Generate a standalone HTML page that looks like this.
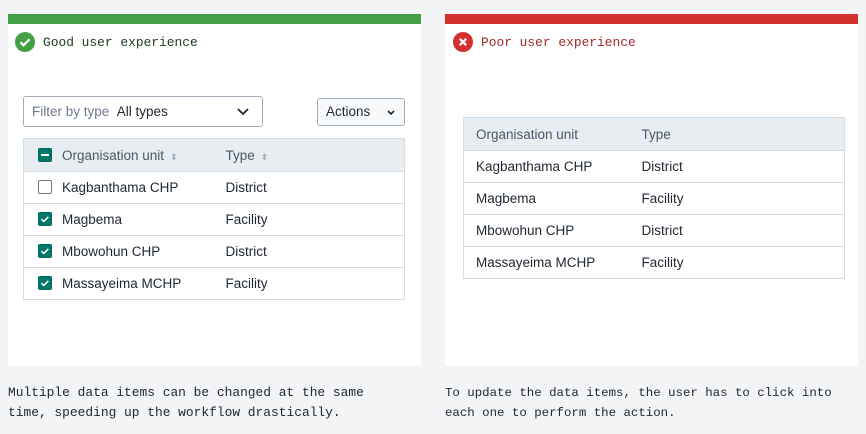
<!DOCTYPE html>
<html><head><style>
*{box-sizing:border-box;margin:0;padding:0}
body{width:866px;height:434px;background:#f3f4f6;position:relative;font-family:"Liberation Sans",sans-serif;overflow:hidden}
.panel{position:absolute;top:14px;width:413px;height:352px;background:#fff}
.bar{height:10px}
.title{position:absolute;top:18px;left:7px;display:flex;align-items:center;font-family:"Liberation Mono",monospace;font-size:12.9px}
.title svg{margin-right:8px}
.cap{position:absolute;top:383px;font-family:"Liberation Mono",monospace;font-size:12.9px;line-height:20px;color:#212934}
table{position:absolute;border-collapse:collapse;font-size:13.5px;color:#212934;width:382px}
td,th{border:1px solid #d5dde5;height:32px;text-align:left;font-weight:normal;padding:0}
th{background:#e8edf2;color:#4a5768;height:33px}
td{border-left:none;border-right:none}
tr td:first-child{border-left:1px solid #d5dde5}
tr td:last-child{border-right:1px solid #d5dde5}
th{border-left:none;border-right:none}
th:first-child{border-left:1px solid #d5dde5}th:last-child{border-right:1px solid #d5dde5}
.cb{display:inline-block;width:14px;height:14px;border-radius:2px;vertical-align:-2px;margin:0 10px 0 14px}
.on{background:#00796b;border:1px solid #00695c;position:relative}
.off{border:1px solid #6e7a8a;background:#fff}
.sort{color:#a0adba;font-size:9px;margin-left:6px}
</style></head><body>
<div class="panel" style="left:8px">
<div class="bar" style="background:#43a047"></div>
<div class="title" style="color:#1b3a1f"><svg width="20" height="20" viewBox="0 0 20 20"><circle cx="10" cy="10" r="10" fill="#43a047"/><path d="M5.5 10.3l3 3 6-6" stroke="#fff" stroke-width="2.2" fill="none"/></svg>Good user experience</div>
<div style="position:absolute;left:15px;top:82px;width:240px;height:31px;border:1px solid #a0adba;border-radius:3px;font-size:13.5px;line-height:29px;padding-left:8px"><span style="color:#6e7a8a">Filter by type</span>&nbsp;&nbsp;<span style="color:#212934">All types</span><svg style="position:absolute;right:13px;top:11px" width="12" height="8" viewBox="0 0 12 8"><path d="M1 1l5 5 5-5" stroke="#212934" stroke-width="1.8" fill="none"/></svg></div>
<div style="position:absolute;left:309px;top:84px;width:88px;height:28px;border:1px solid #a0adba;border-radius:3px;background:#f8f9fa;font-size:13.5px;line-height:26px;padding-left:8px;color:#212934">Actions<svg style="position:absolute;right:9px;top:11px" width="8" height="6" viewBox="0 0 8 6"><path d="M1 1l3 3 3-3" stroke="#212934" stroke-width="1.6" fill="none"/></svg></div>
<table style="left:15px;top:124px">
<tr><th style="width:202px"><span class="cb on"><span style="position:absolute;left:2px;top:5px;width:8px;height:2px;background:#fff"></span></span>Organisation unit<span class="sort">⬍</span></th><th>Type<span class="sort">⬍</span></th></tr>
<tr><td><span class="cb off"></span>Kagbanthama CHP</td><td>District</td></tr>
<tr><td><span class="cb on"><svg width="12" height="12" viewBox="0 0 12 12" style="position:absolute;left:0;top:0"><path d="M2.5 6.2l2.3 2.2 4.5-4.5" stroke="#fff" stroke-width="1.6" fill="none"/></svg></span>Magbema</td><td>Facility</td></tr>
<tr><td><span class="cb on"><svg width="12" height="12" viewBox="0 0 12 12" style="position:absolute;left:0;top:0"><path d="M2.5 6.2l2.3 2.2 4.5-4.5" stroke="#fff" stroke-width="1.6" fill="none"/></svg></span>Mbowohun CHP</td><td>District</td></tr>
<tr><td><span class="cb on"><svg width="12" height="12" viewBox="0 0 12 12" style="position:absolute;left:0;top:0"><path d="M2.5 6.2l2.3 2.2 4.5-4.5" stroke="#fff" stroke-width="1.6" fill="none"/></svg></span>Massayeima MCHP</td><td>Facility</td></tr>
</table>
</div>
<div class="panel" style="left:445px">
<div class="bar" style="background:#d32f2f"></div>
<div class="title" style="color:#a52a2a;left:8px"><svg width="20" height="20" viewBox="0 0 20 20"><circle cx="10" cy="10" r="10" fill="#d32f2f"/><path d="M6.8 6.8l6.4 6.4M13.2 6.8l-6.4 6.4" stroke="#fff" stroke-width="2.2"/></svg>Poor user experience</div>
<table style="left:18px;top:103px">
<tr><th style="width:178px;padding-left:12px">Organisation unit</th><th>Type</th></tr>
<tr><td style="padding-left:12px">Kagbanthama CHP</td><td>District</td></tr>
<tr><td style="padding-left:12px">Magbema</td><td>Facility</td></tr>
<tr><td style="padding-left:12px">Mbowohun CHP</td><td>District</td></tr>
<tr><td style="padding-left:12px">Massayeima MCHP</td><td>Facility</td></tr>
</table>
</div>
<div class="cap" style="left:8px">Multiple data items can be changed at the same<br>time, speeding up the workflow drastically.</div>
<div class="cap" style="left:445px;font-size:12.4px">To update the data items, the user has to click into<br>each one to perform the action.</div>
</body></html>
